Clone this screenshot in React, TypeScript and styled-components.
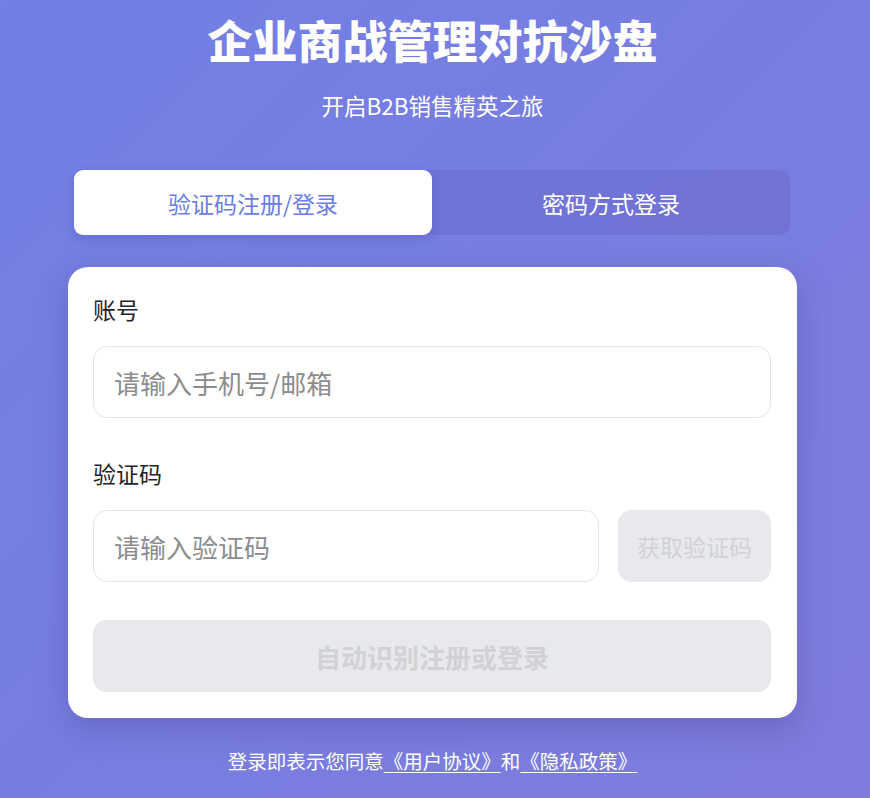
import React, { useState } from 'react';
import styled, { createGlobalStyle } from 'styled-components';

const GlobalStyle = createGlobalStyle`
  html, body {
    margin: 0;
    padding: 0;
  }
  body {
    font-family: 'Noto Sans CJK SC', 'Noto Sans', sans-serif;
    background: linear-gradient(135deg, #727fe5 0%, #7e7cdc 100%);
    min-height: 798px;
  }
  * {
    box-sizing: border-box;
  }
`;

const Page = styled.div`
  min-height: 798px;
  padding: 12px 73px 0 68px;
  display: flex;
  flex-direction: column;
  align-items: stretch;
`;

const Title = styled.h1`
  margin: 0;
  text-align: center;
  font-size: 45px;
  line-height: 56px;
  font-weight: 800;
  color: #ffffff;
`;

const Subtitle = styled.p`
  margin: 22px 0 0;
  text-align: center;
  font-size: 22.5px;
  line-height: 30px;
  color: #ffffff;
`;

const Tabs = styled.div`
  margin: 50px 7px 0 6px;
  display: flex;
  height: 65px;
  border-radius: 10px;
  background: rgba(60, 50, 140, 0.12);
`;

const Tab = styled.button<{ $active: boolean }>`
  flex: 1;
  border: none;
  border-radius: 9px;
  font-family: inherit;
  font-size: 23px;
  cursor: pointer;
  background: ${(p) => (p.$active ? '#ffffff' : 'transparent')};
  color: ${(p) => (p.$active ? '#6a7ce6' : '#ffffff')};
  box-shadow: ${(p) => (p.$active ? '0 4px 12px rgba(40, 40, 120, 0.18)' : 'none')};
`;

const Card = styled.div`
  margin-top: 32px;
  background: #ffffff;
  border-radius: 20px;
  padding: 27px 26px 26px 25px;
  box-shadow: 0 12px 32px rgba(40, 30, 110, 0.22);
  display: flex;
  flex-direction: column;
`;

const Label = styled.label<{ $top?: number }>`
  margin-top: ${(p) => p.$top ?? 0}px;
  font-size: 23px;
  line-height: 30px;
  color: #1f2329;
`;

const Input = styled.input`
  width: 100%;
  height: 72px;
  margin-top: 22px;
  padding: 0 20px;
  border: 1px solid #e4e5ea;
  border-radius: 14px;
  font-family: inherit;
  font-size: 26px;
  color: #333;
  outline: none;
  &::placeholder {
    color: #8c8c8c;
  }
`;

const CodeRow = styled.div`
  display: flex;
  gap: 19px;
  margin-top: 22px;
  & > input {
    margin-top: 0;
    flex: 1;
  }
`;

const CodeButton = styled.button`
  width: 153px;
  height: 72px;
  border: none;
  border-radius: 14px;
  background: #e8e9ec;
  color: #d2d2d4;
  font-family: inherit;
  font-size: 23px;
`;

const SubmitButton = styled.button`
  margin-top: 38px;
  height: 72px;
  border: none;
  border-radius: 14px;
  background: #e8e9ec;
  color: #d2d2d4;
  font-family: inherit;
  font-size: 26px;
  font-weight: 700;
`;

const Footer = styled.p`
  margin: 28px 0 0;
  text-align: center;
  font-size: 19.5px;
  line-height: 30px;
  color: #ffffff;
`;

const Link = styled.a`
  color: #ffffff;
  text-decoration: underline;
  text-underline-offset: 3px;
`;

export default function App() {
  const [mode, setMode] = useState<'code' | 'password'>('code');

  return (
    <>
      <GlobalStyle />
      <Page>
        <Title>企业商战管理对抗沙盘</Title>
        <Subtitle>开启B2B销售精英之旅</Subtitle>
        <Tabs>
          <Tab $active={mode === 'code'} onClick={() => setMode('code')}>
            验证码注册/登录
          </Tab>
          <Tab $active={mode === 'password'} onClick={() => setMode('password')}>
            密码方式登录
          </Tab>
        </Tabs>
        <Card>
          <Label>账号</Label>
          <Input placeholder="请输入手机号/邮箱" />
          <Label $top={40}>验证码</Label>
          <CodeRow>
            <Input placeholder="请输入验证码" />
            <CodeButton disabled>获取验证码</CodeButton>
          </CodeRow>
          <SubmitButton disabled>自动识别注册或登录</SubmitButton>
        </Card>
        <Footer>
          登录即表示您同意<Link>《用户协议》</Link>和<Link>《隐私政策》</Link>
        </Footer>
      </Page>
    </>
  );
}
